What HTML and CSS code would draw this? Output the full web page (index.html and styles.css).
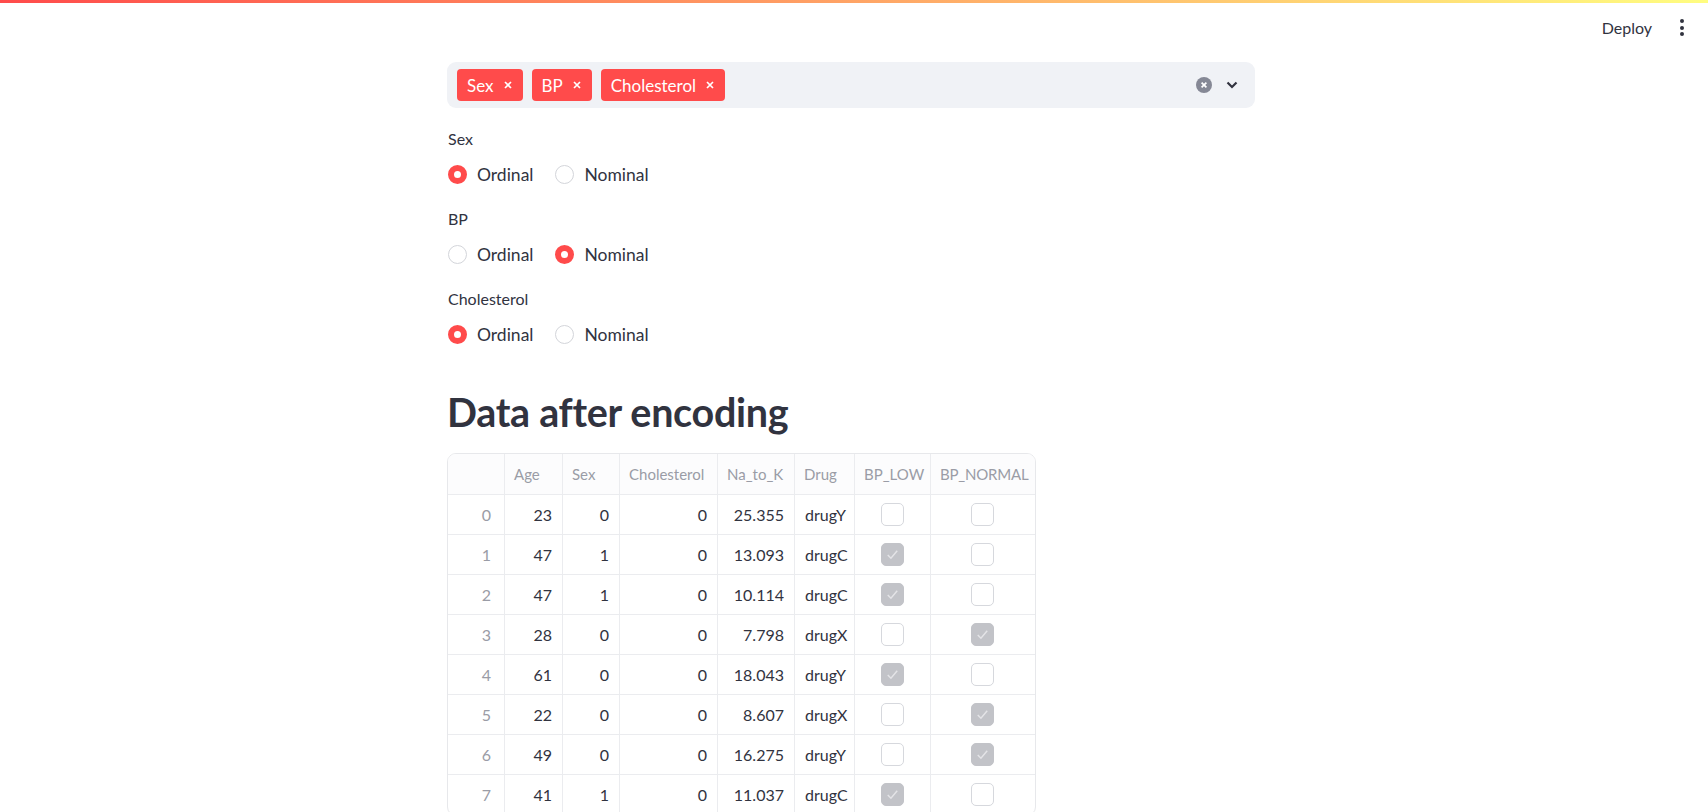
FILE: index.html
```html
<!DOCTYPE html>
<html lang="en">
<head>
<meta charset="utf-8">
<title>Encoding</title>
<link rel="stylesheet" href="styles.css">
</head>
<body>
<div class="deco"></div>
<header class="topbar">
  <span class="deploy">Deploy</span>
  <span class="kebab"><i></i><i></i><i></i></span>
</header>
<div class="wrap">
  <main class="main">
    <div class="multiselect">
      <div class="tags">
        <span class="tag">Sex<svg class="tag-x" viewBox="0 0 10 10"><path d="M2 2L8 8M8 2L2 8"/></svg></span>
        <span class="tag">BP<svg class="tag-x" viewBox="0 0 10 10"><path d="M2 2L8 8M8 2L2 8"/></svg></span>
        <span class="tag">Cholesterol<svg class="tag-x" viewBox="0 0 10 10"><path d="M2 2L8 8M8 2L2 8"/></svg></span>
      </div>
      <div class="controls">
        <svg class="clear" viewBox="0 0 16 16"><circle cx="8" cy="8" r="8"/><path d="M5.6 5.6L10.4 10.4M10.4 5.6L5.6 10.4"/></svg>
        <svg class="chev" viewBox="0 0 12 8"><path d="M1.5 1.5L6 6L10.5 1.5"/></svg>
      </div>
    </div>

    <div class="group first">
      <div class="label">Sex</div>
      <div class="radios">
        <span class="opt"><span class="dot on"></span>Ordinal</span>
        <span class="opt"><span class="dot"></span>Nominal</span>
      </div>
    </div>
    <div class="group">
      <div class="label">BP</div>
      <div class="radios">
        <span class="opt"><span class="dot"></span>Ordinal</span>
        <span class="opt"><span class="dot on"></span>Nominal</span>
      </div>
    </div>
    <div class="group">
      <div class="label">Cholesterol</div>
      <div class="radios">
        <span class="opt"><span class="dot on"></span>Ordinal</span>
        <span class="opt"><span class="dot"></span>Nominal</span>
      </div>
    </div>

    <h2 class="heading">Data after encoding</h2>

    <div class="table">
      <div class="row head">
        <div class="c"></div><div class="c">Age</div><div class="c">Sex</div><div class="c">Cholesterol</div><div class="c">Na_to_K</div><div class="c">Drug</div><div class="c">BP_LOW</div><div class="c">BP_NORMAL</div>
      </div>
      <div class="row"><div class="c idx">0</div><div class="c num">23</div><div class="c num">0</div><div class="c num">0</div><div class="c num">25.355</div><div class="c txt">drugY</div><div class="c chk"><span class="box"></span></div><div class="c chk"><span class="box"></span></div></div>
      <div class="row"><div class="c idx">1</div><div class="c num">47</div><div class="c num">1</div><div class="c num">0</div><div class="c num">13.093</div><div class="c txt">drugC</div><div class="c chk"><span class="box on"><svg viewBox="0 0 20 20"><path d="M5.5 10.5L8.5 13.5L14.5 6.5"/></svg></span></div><div class="c chk"><span class="box"></span></div></div>
      <div class="row"><div class="c idx">2</div><div class="c num">47</div><div class="c num">1</div><div class="c num">0</div><div class="c num">10.114</div><div class="c txt">drugC</div><div class="c chk"><span class="box on"><svg viewBox="0 0 20 20"><path d="M5.5 10.5L8.5 13.5L14.5 6.5"/></svg></span></div><div class="c chk"><span class="box"></span></div></div>
      <div class="row"><div class="c idx">3</div><div class="c num">28</div><div class="c num">0</div><div class="c num">0</div><div class="c num">7.798</div><div class="c txt">drugX</div><div class="c chk"><span class="box"></span></div><div class="c chk"><span class="box on"><svg viewBox="0 0 20 20"><path d="M5.5 10.5L8.5 13.5L14.5 6.5"/></svg></span></div></div>
      <div class="row"><div class="c idx">4</div><div class="c num">61</div><div class="c num">0</div><div class="c num">0</div><div class="c num">18.043</div><div class="c txt">drugY</div><div class="c chk"><span class="box on"><svg viewBox="0 0 20 20"><path d="M5.5 10.5L8.5 13.5L14.5 6.5"/></svg></span></div><div class="c chk"><span class="box"></span></div></div>
      <div class="row"><div class="c idx">5</div><div class="c num">22</div><div class="c num">0</div><div class="c num">0</div><div class="c num">8.607</div><div class="c txt">drugX</div><div class="c chk"><span class="box"></span></div><div class="c chk"><span class="box on"><svg viewBox="0 0 20 20"><path d="M5.5 10.5L8.5 13.5L14.5 6.5"/></svg></span></div></div>
      <div class="row"><div class="c idx">6</div><div class="c num">49</div><div class="c num">0</div><div class="c num">0</div><div class="c num">16.275</div><div class="c txt">drugY</div><div class="c chk"><span class="box"></span></div><div class="c chk"><span class="box on"><svg viewBox="0 0 20 20"><path d="M5.5 10.5L8.5 13.5L14.5 6.5"/></svg></span></div></div>
      <div class="row"><div class="c idx">7</div><div class="c num">41</div><div class="c num">1</div><div class="c num">0</div><div class="c num">11.037</div><div class="c txt">drugC</div><div class="c chk"><span class="box on"><svg viewBox="0 0 20 20"><path d="M5.5 10.5L8.5 13.5L14.5 6.5"/></svg></span></div><div class="c chk"><span class="box"></span></div></div>
    </div>
  </main>
</div>
</body>
</html>
```

FILE: styles.css
```css
html, body {
  margin: 0;
  padding: 0;
  height: 100%;
  overflow: hidden;
  background: #ffffff;
}
body {
  font-family: "Lato", "Source Sans Pro", "Noto Sans", sans-serif;
  color: #31333f;
}

.deco {
  height: 3px;
  background: linear-gradient(90deg, #ff4b4b, #fffd80);
}

.topbar {
  height: 49px;
  display: flex;
  align-items: center;
  justify-content: flex-end;
  padding-right: 24px;
  gap: 28px;
}
.deploy {
  font-size: 16px;
  color: #31333f;
}
.kebab {
  display: flex;
  flex-direction: column;
  gap: 2.5px;
  width: 4px;
}
.kebab i {
  display: block;
  width: 4px;
  height: 4px;
  border-radius: 50%;
  background: #31333f;
}

.wrap {
  display: flex;
  justify-content: center;
  padding-right: 6px;
  padding-top: 10px;
}
.main {
  width: 808px;
  display: flex;
  flex-direction: column;
}

/* multiselect */
.multiselect {
  height: 46px;
  box-sizing: border-box;
  background: #f0f2f6;
  border-radius: 9px;
  display: flex;
  align-items: center;
  justify-content: space-between;
  padding: 0 17px 0 10px;
}
.tags {
  display: flex;
  gap: 9px;
}
.tag {
  height: 32px;
  box-sizing: border-box;
  background: #ff4b4b;
  color: #ffffff;
  border-radius: 4px;
  display: inline-flex;
  align-items: center;
  gap: 9px;
  padding: 0 10px 0 10px;
  font-size: 17px;
}
.tag-x {
  width: 10px;
  height: 10px;
  fill: none;
  stroke: #ffffff;
  stroke-width: 1.7;
}
.controls {
  display: flex;
  align-items: center;
  gap: 14px;
}
.clear {
  width: 16px;
  height: 16px;
}
.clear circle { fill: #858895; }
.clear path { stroke: #ffffff; stroke-width: 1.7; fill: none; }
.chev {
  width: 12px;
  height: 8px;
  fill: none;
  stroke: #31333f;
  stroke-width: 2.2;
}

/* radio groups */
.group {
  display: flex;
  flex-direction: column;
  gap: 12px;
  margin-top: 22px;
}
.group.first { margin-top: 20px; }
.label {
  height: 22px;
  line-height: 22px;
  font-size: 16px;
  padding-left: 1px;
}
.radios {
  height: 24px;
  display: flex;
  align-items: center;
  gap: 22px;
  padding-left: 1px;
}
.opt {
  display: inline-flex;
  align-items: center;
  gap: 10px;
  font-size: 17.5px;
}
.dot {
  width: 19px;
  height: 19px;
  box-sizing: border-box;
  border-radius: 50%;
  border: 1px solid #d3d5da;
  background: #ffffff;
}
.dot.on {
  border: 6px solid #ff4b4b;
  background: #ffffff;
}

/* heading */
.heading {
  margin: 40px 0 0 0;
  height: 52px;
  line-height: 52px;
  font-size: 39.5px;
  font-weight: 700;
  letter-spacing: -0.3px;
  color: #31333f;
}

/* table */
.table {
  margin-top: 15px;
  width: 587px;
  border: 1px solid #e7e8eb;
  border-radius: 9px;
  overflow: hidden;
  font-size: 16px;
}
.row {
  display: grid;
  grid-template-columns: 57px 58px 57px 98px 77px 60px 76px 103px;
  height: 40px;
  box-sizing: border-box;
  border-bottom: 1px solid #ebecef;
}
.row.head {
  height: 41px;
  background: #fcfcfd;
  color: #9a9ca6;
  font-size: 15px;
}
.c {
  border-right: 1px solid #ebecef;
  display: flex;
  align-items: center;
  padding: 0 10px;
  white-space: nowrap;
  overflow: hidden;
}
.c:last-child { border-right: none; }
.head .c { padding: 0 9px; overflow: visible; }
.head .c:last-child { letter-spacing: -0.2px; }
.idx {
  justify-content: flex-end;
  color: #9a9ca6;
  padding-right: 13px;
}
.num { justify-content: flex-end; }
.txt { justify-content: flex-start; }
.chk { justify-content: center; }
.box {
  width: 23px;
  height: 23px;
  box-sizing: border-box;
  border-radius: 5px;
  border: 1px solid #d6d8dd;
  background: #ffffff;
  display: flex;
}
.box.on {
  border-color: #c2c3c8;
  background: #c2c3c8;
}
.box svg {
  width: 100%;
  height: 100%;
  fill: none;
  stroke: #e4e4e7;
  stroke-width: 1.4;
}
```
